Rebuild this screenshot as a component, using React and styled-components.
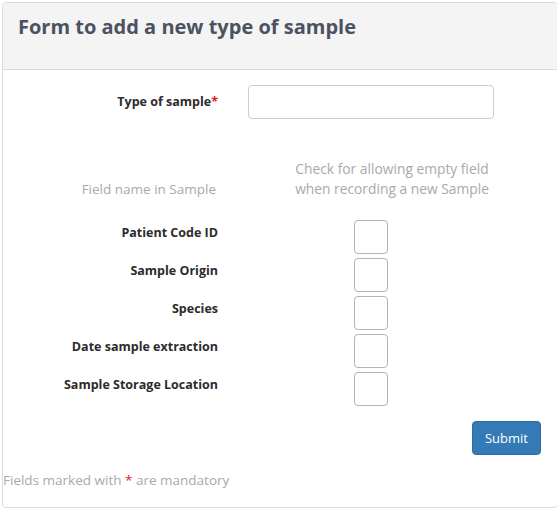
import React from 'react';
import styled, { createGlobalStyle } from 'styled-components';

const GlobalStyle = createGlobalStyle`
  body {
    margin: 0;
    background: #fff;
    font-family: "Open Sans", "Noto Sans", sans-serif;
    overflow: hidden;
  }
`;

const Panel = styled.div`
  margin: 2px 0 0 2px;
  width: 556px;
  height: 506px;
  border: 1px solid #dcdcdc;
  border-radius: 4px;
  box-sizing: border-box;
  display: flex;
  flex-direction: column;
`;

const PanelHeader = styled.div`
  height: 67px;
  background: #f4f4f4;
  border-bottom: 1px solid #dcdcdc;
  border-radius: 4px 4px 0 0;
  padding: 10px 15px 0;
  box-sizing: border-box;
`;

const Title = styled.h3`
  margin: 0;
  font-size: 20px;
  font-weight: 700;
  color: #4b5262;
`;

const Form = styled.form`
  display: flex;
  flex-direction: column;
  padding-top: 15px;
`;

const Row = styled.div`
  display: grid;
  grid-template-columns: 215px 1fr;
  column-gap: 30px;
  align-items: ${(p) => p.$align || 'center'};
  margin-bottom: ${(p) => p.$gap || 0}px;
`;

const Label = styled.label`
  text-align: right;
  font-size: 12.5px;
  line-height: 20px;
  font-weight: 700;
  color: #2b2b2b;
  padding-top: ${(p) => p.$top || 0}px;
`;

const Required = styled.span`
  color: #e0201b;
`;

const TextInput = styled.input`
  width: 246px;
  height: 34px;
  box-sizing: border-box;
  border: 1px solid #cccccc;
  border-radius: 4px;
  padding: 6px 12px;
  font-size: 14px;
`;

const Hint = styled.div`
  font-size: ${(p) => p.$center ? '13.8px' : '13.5px'};
  line-height: 20px;
  color: #a9a9a9;
  text-align: ${(p) => p.$center ? 'center' : 'right'};
  width: ${(p) => p.$center ? '210px' : 'auto'};
  margin-left: ${(p) => p.$center ? '39px' : '0'};
  padding-right: ${(p) => p.$center ? '0' : '2px'};
`;

const Box = styled.input.attrs({ type: 'checkbox' })`
  appearance: none;
  margin: 0 0 0 106px;
  width: 34px;
  height: 34px;
  border: 1px solid #b9b2ad;
  border-radius: 4px;
  background: #fff;
  box-sizing: border-box;
`;

const Actions = styled.div`
  display: flex;
  justify-content: flex-end;
  padding: 11px 16px 0 0;
`;

const SubmitButton = styled.button`
  width: 69px;
  height: 34px;
  background: #337ab7;
  border: 1px solid #2e6da4;
  border-radius: 4px;
  color: #fff;
  font-family: inherit;
  font-size: 13px;
`;

const Note = styled.p`
  margin: 15px 0 0;
  font-size: 13.5px;
  line-height: 20px;
  color: #a9a9a9;
`;

const fields = [
  'Patient Code ID',
  'Sample Origin',
  'Species',
  'Date sample extraction',
  'Sample Storage Location',
];

const App = () => {
  return (
    <>
      <GlobalStyle />
      <Panel>
        <PanelHeader>
          <Title>Form to add a new type of sample</Title>
        </PanelHeader>
        <Form onSubmit={(e) => e.preventDefault()}>
          <Row $gap={40}>
            <Label>Type of sample<Required>*</Required></Label>
            <TextInput type="text" />
          </Row>
          <Row $align="end" $gap={21}>
            <Hint>Field name in Sample</Hint>
            <Hint $center>Check for allowing empty field<br />when recording a new Sample</Hint>
          </Row>
          {fields.map((name) => (
            <Row key={name} $align="start" $gap={4}>
              <Label $top={3}>{name}</Label>
              <Box />
            </Row>
          ))}
          <Actions>
            <SubmitButton type="submit">Submit</SubmitButton>
          </Actions>
          <Note>Fields marked with <Required>*</Required> are mandatory</Note>
        </Form>
      </Panel>
    </>
  );
};

export default App;
